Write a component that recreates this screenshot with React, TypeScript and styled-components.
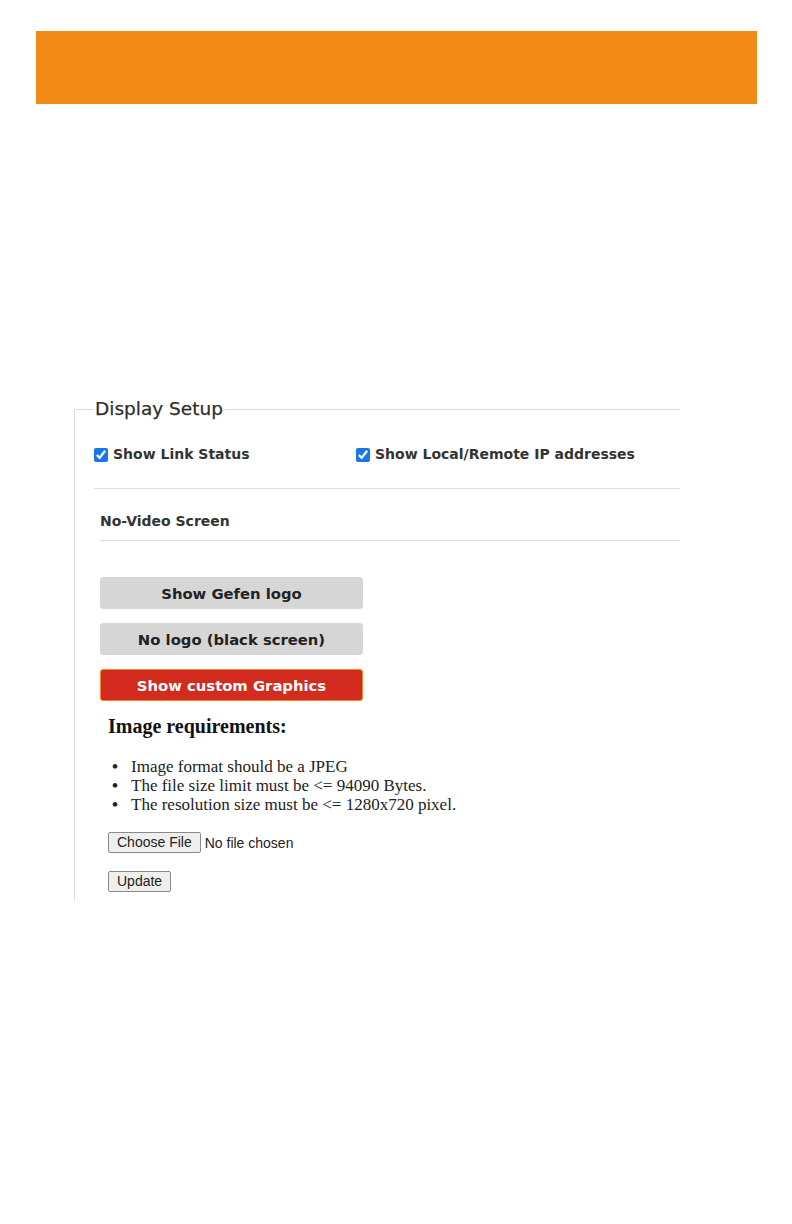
import React from "react";
import styled, { createGlobalStyle } from "styled-components";

const Global = createGlobalStyle`
  html, body { margin: 0; padding: 0; background: #ffffff; }
  body { font-family: "DejaVu Sans", Verdana, sans-serif; color: #333; }
`;

const Page = styled.div`
  width: 792px;
  height: 1224px;
  overflow: hidden;
`;

const Banner = styled.div`
  margin: 31px 0 0 36px;
  width: 721px;
  height: 73px;
  background: #f28a17;
`;

const Clip = styled.div`
  margin: 291px 0 0 74px;
  width: 606px;
  height: 505px;
  overflow: hidden;
`;

const Frame = styled.fieldset`
  margin: 0;
  padding: 0 0 0 19px;
  border: 1px solid #dcdcdc;
  width: 800px;
  min-height: 700px;
  box-sizing: border-box;
`;

const Legend = styled.legend`
  padding: 0 1px;
  font-family: "DejaVu Sans", Verdana, sans-serif;
  font-size: 18.5px;
  line-height: 28px;
  color: #2e2e2e;
  -webkit-text-stroke: 0.25px #2e2e2e;
`;

const CheckRow = styled.div`
  margin-top: 23px;
  display: grid;
  grid-template-columns: 262px auto;
  height: 17px;
`;

const CheckItem = styled.label`
  display: flex;
  align-items: center;
  gap: 5px;
  font-size: 14px;
  font-weight: bold;
  line-height: 17px;
  color: #333;
  white-space: nowrap;
`;

const Box = styled.input`
  width: 14px;
  height: 14px;
  margin: 0;
  accent-color: #1877e6;
`;

const Divider = styled.div<{ $top: number }>`
  margin-top: ${(p) => p.$top}px;
  height: 1px;
  background: #dedede;
`;

const Section = styled.div`
  padding-left: 6px;
`;

const SectionTitle = styled.div`
  margin-top: 24px;
  font-size: 14px;
  font-weight: bold;
  line-height: 17px;
  color: #333;
`;

const ButtonStack = styled.div`
  margin-top: 36px;
  display: flex;
  flex-direction: column;
  gap: 14px;
  width: 263px;
`;

const ModeButton = styled.div<{ $active?: boolean }>`
  height: 32px;
  box-sizing: border-box;
  border-radius: 3px;
  display: flex;
  align-items: center;
  justify-content: center;
  font-size: 14.8px;
  font-weight: bold;
  background: ${(p) => (p.$active ? "#d42b1f" : "#d6d6d6")};
  color: ${(p) => (p.$active ? "#ffffff" : "#222")};
  border: 1px solid ${(p) => (p.$active ? "#f4891f" : "#d6d6d6")};
`;

const Requirements = styled.div`
  padding-left: 8px;
  font-family: "Liberation Serif", "Times New Roman", serif;
  color: #111;
`;

const ReqTitle = styled.h3`
  margin: 14px 0 0 0;
  font-size: 20px;
  font-weight: bold;
  line-height: 22px;
`;

const ReqList = styled.ul`
  margin: 20px 0 0 0;
  padding: 0;
  list-style: none;
  font-size: 17px;
  line-height: 19px;
  color: #222;
`;

const ReqItem = styled.li`
  display: flex;
`;

const Bullet = styled.span`
  width: 23px;
  padding-left: 4px;
  box-sizing: border-box;
  font-weight: bold;
  flex: none;
`;

const FileRow = styled.div`
  margin-top: 18px;
  display: flex;
  align-items: center;
  gap: 4px;
  font-family: "Liberation Sans", Arial, sans-serif;
  font-size: 14px;
  color: #222;
`;

const NativeButton = styled.button`
  height: 21px;
  box-sizing: border-box;
  padding: 0 8px;
  margin: 0;
  background: #efefef;
  border: 1px solid #8a8a8a;
  border-radius: 2px;
  font-family: "Liberation Sans", Arial, sans-serif;
  font-size: 14px;
  color: #222;
  line-height: 19px;
`;

const UpdateRow = styled.div`
  margin-top: 18px;
`;

const requirements = [
  "Image format should be a JPEG",
  "The file size limit must be <= 94090 Bytes.",
  "The resolution size must be <= 1280x720 pixel.",
];

export default function App() {
  return (
    <Page>
      <Global />
      <Banner />
      <Clip>
        <Frame>
          <Legend>Display Setup</Legend>
          <CheckRow>
            <CheckItem>
              <Box type="checkbox" defaultChecked />
              Show Link Status
            </CheckItem>
            <CheckItem>
              <Box type="checkbox" defaultChecked />
              Show Local/Remote IP addresses
            </CheckItem>
          </CheckRow>
          <Divider $top={25} />
          <Section>
            <SectionTitle>No-Video Screen</SectionTitle>
            <Divider $top={10} />
            <ButtonStack>
              <ModeButton>Show Gefen logo</ModeButton>
              <ModeButton>No logo (black screen)</ModeButton>
              <ModeButton $active>Show custom Graphics</ModeButton>
            </ButtonStack>
            <Requirements>
              <ReqTitle>Image requirements:</ReqTitle>
              <ReqList>
                {requirements.map((r) => (
                  <ReqItem key={r}>
                    <Bullet>•</Bullet>
                    <span>{r}</span>
                  </ReqItem>
                ))}
              </ReqList>
              <FileRow>
                <NativeButton type="button">Choose File</NativeButton>
                <span>No file chosen</span>
              </FileRow>
              <UpdateRow>
                <NativeButton type="button">Update</NativeButton>
              </UpdateRow>
            </Requirements>
          </Section>
        </Frame>
      </Clip>
    </Page>
  );
}
